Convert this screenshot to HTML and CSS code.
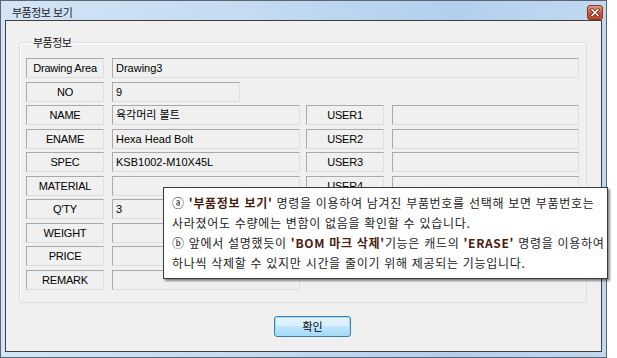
FILE: index.html
```html
<!DOCTYPE html>
<html lang="ko">
<head>
<meta charset="utf-8">
<title>부품정보 보기</title>
<link rel="stylesheet" href="styles.css">
</head>
<body>
<div class="window">
  <div class="titlebar">
    <span class="title">부품정보 보기</span>
    <span class="close">
      <svg width="16" height="15" viewBox="0 0 16 15">
        <defs>
          <linearGradient id="cg" x1="0" y1="0" x2="0" y2="1">
            <stop offset="0" stop-color="#e9a48f"/>
            <stop offset="0.5" stop-color="#d2583b"/>
            <stop offset="1" stop-color="#c0432a"/>
          </linearGradient>
        </defs>
        <rect x="0.5" y="0.5" width="15" height="14" rx="2.5" fill="url(#cg)" stroke="#7d3a2c"/>
        <path d="M5 4.5 L11 10.5 M11 4.5 L5 10.5" stroke="#4a1a10" stroke-width="3" stroke-linecap="square"/>
        <path d="M5 4.5 L11 10.5 M11 4.5 L5 10.5" stroke="#fff" stroke-width="1.6" stroke-linecap="square"/>
      </svg>
    </span>
  </div>
  <div class="client">
    <fieldset class="group">
      <legend>부품정보</legend>
      <div class="rows">
        <div class="row"><div class="lbl">Drawing Area</div><div class="val full">Drawing3</div></div>
        <div class="row"><div class="lbl">NO</div><div class="val short">9</div></div>
        <div class="row"><div class="lbl">NAME</div><div class="val mid">육각머리 볼트</div><div class="lbl user">USER1</div><div class="val right"></div></div>
        <div class="row"><div class="lbl">ENAME</div><div class="val mid">Hexa Head Bolt</div><div class="lbl user">USER2</div><div class="val right"></div></div>
        <div class="row"><div class="lbl">SPEC</div><div class="val mid">KSB1002-M10X45L</div><div class="lbl user">USER3</div><div class="val right"></div></div>
        <div class="row"><div class="lbl">MATERIAL</div><div class="val mid"></div><div class="lbl user">USER4</div><div class="val right"></div></div>
        <div class="row"><div class="lbl">Q'TY</div><div class="val mid">3</div></div>
        <div class="row"><div class="lbl">WEIGHT</div><div class="val mid"></div></div>
        <div class="row"><div class="lbl">PRICE</div><div class="val mid"></div></div>
        <div class="row"><div class="lbl">REMARK</div><div class="val mid"></div></div>
      </div>
    </fieldset>
    <div class="actions"><button class="ok">확인</button></div>
  </div>
  <div class="note">
    <p>ⓐ <b>'부품정보 보기'</b> 명령을 이용하여 남겨진 부품번호를 선택해 보면 부품번호는</p>
    <p>사라졌어도 수량에는 변함이 없음을 확인할 수 있습니다.</p>
    <p>ⓑ 앞에서 설명했듯이 <b>'BOM 마크 삭제'</b>기능은 캐드의 <b>'ERASE'</b> 명령을 이용하여</p>
    <p>하나씩 삭제할 수 있지만 시간을 줄이기 위해 제공되는 기능입니다.</p>
  </div>
</div>
</body>
</html>
```

FILE: styles.css
```css
* { box-sizing: border-box; }
html, body { margin: 0; padding: 0; background: #fff; }
body {
  font-family: "Liberation Sans", "Noto Sans CJK KR", sans-serif;
  color: #000;
}
.window {
  position: relative;
  width: 607px;
  height: 358px;
  border: 1px solid #5c6670;
  padding: 0 4px 5px 4px;
  background: linear-gradient(to right, #d3e4f5 0%, #c4dbf1 40%, #b3cfee 75%, #c2d8f0 100%);
  display: flex;
  flex-direction: column;
}
.titlebar {
  height: 19px;
  display: flex;
  align-items: center;
  justify-content: space-between;
  padding-left: 7px;
}
.title {
  font-family: "Noto Sans CJK KR", sans-serif;
  font-size: 11px;
  letter-spacing: -0.5px;
  color: #1b1b1b;
  line-height: 14px;
  margin-top: 2px;
}
.close { display: flex; margin-top: 3px; margin-right: -1px; }
.client {
  flex: 1;
  border: 1px solid #3f3f3f;
  background: #f0f0f0;
  padding: 14px 0 0 13px;
}
.group {
  margin: 0;
  width: 568px;
  border: 1px solid #d9dfe4;
  border-radius: 3px;
  padding: 0 0 12px 6px;
  min-width: 0;
  box-shadow: inset 1px 1px 0 #fff;
}
.group legend {
  font-family: "Noto Sans CJK KR", sans-serif;
  font-size: 11px;
  letter-spacing: -0.5px;
  line-height: 14px;
  padding: 0 2px;
  margin-left: 5px;
  color: #111;
}
.rows {
  display: flex;
  flex-direction: column;
  gap: 3.56px;
  padding-top: 9px;
}
.row { display: flex; height: 20px; }
.lbl, .val {
  height: 20px;
  border: 1px solid;
  border-color: #a9a9a9 #dedede #dedede #a9a9a9;
  background: #f0f0f0;
  font-size: 11px;
  line-height: 18px;
  white-space: nowrap;
  overflow: hidden;
}
.lbl { width: 78px; text-align: center; letter-spacing: -0.2px; }
.val { margin-left: 8px; padding-left: 3px; }
.val.full { width: 467px; }
.val.short { width: 128px; }
.val.mid { width: 188px; }
.lbl.user { margin-left: 6px; }
.val.right { width: 187px; }
.actions {
  display: flex;
  padding-left: 255px;
  margin-top: 13px;
}
.ok {
  width: 77px;
  height: 21px;
  border: 1px solid #3d7bad;
  border-radius: 3px;
  background: linear-gradient(#e5f4fc 0%, #d9f0fc 45%, #bee6fd 50%, #a7d9f5 100%);
  box-shadow: inset 0 0 0 1px #9fe1fc;
  font-family: "Noto Sans CJK KR", sans-serif;
  font-size: 11px;
  line-height: 17px;
  padding: 0;
  color: #000;
}
.note {
  position: absolute;
  left: 162px;
  top: 186px;
  width: 445px;
  height: 92px;
  background: #fff;
  border: 1px solid #3a3a3a;
  box-shadow: 2px 2px 2px rgba(0, 0, 0, 0.45);
  padding: 5px 0 0 8px;
  font-family: "Noto Sans CJK KR", sans-serif;
  font-size: 12px;
  color: #222;
}
.note p {
  margin: 0;
  line-height: 20px;
  white-space: nowrap;
  letter-spacing: 0.7px;
}
.note b { color: #4b1c10; font-weight: 700; }
```
